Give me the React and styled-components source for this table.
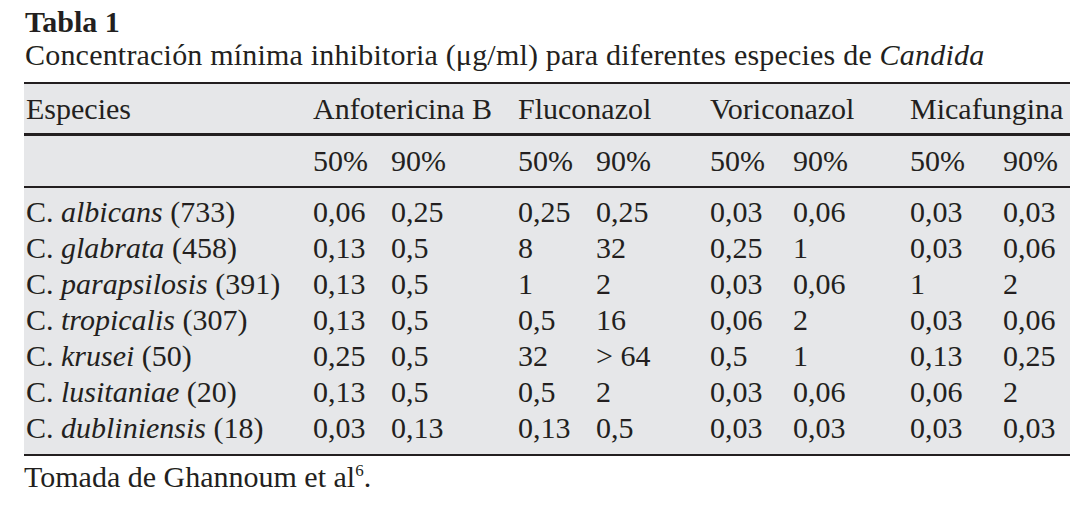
import styled, { createGlobalStyle } from "styled-components";

const GlobalStyle = createGlobalStyle`
  html, body {
    margin: 0;
    padding: 0;
    background: #ffffff;
  }
  body {
    font-family: "Liberation Serif", "Times New Roman", serif;
    color: #231f20;
  }
`;

const Page = styled.div`
  width: 1079px;
  height: 512px;
  padding: 5px 0 0 24px;
  box-sizing: border-box;
  overflow: hidden;
`;

const Title = styled.div`
  font-size: 30px;
  font-weight: 700;
  line-height: 33px;
  padding-left: 1px;
`;

const Caption = styled.div`
  font-size: 30px;
  line-height: 33px;
  letter-spacing: 0.2px;
  padding-left: 1px;
  margin-bottom: 11px;
`;

const Table = styled.table`
  width: 1046px;
  table-layout: fixed;
  border-collapse: separate;
  border-spacing: 0;
  background: #e6e7e9;
  border-top: 2px solid #231f20;
  border-bottom: 2px solid #231f20;
  font-size: 30px;
  line-height: 36px;

  tbody tr:first-child td {
    padding-top: 6px;
  }
  tbody tr:last-child td {
    padding-bottom: 8px;
  }
`;

const HeadCell = styled.th`
  padding: 7px 0 6px ${(p) => (p.$first ? "2px" : "0")};
  text-align: left;
  font-weight: 400;
  white-space: nowrap;
  border-bottom: 3px solid #231f20;
`;

const SubCell = styled.th`
  padding: 7px 0 7px 0;
  text-align: left;
  font-weight: 400;
  white-space: nowrap;
  border-bottom: 2px solid #231f20;
`;

const Cell = styled.td`
  padding: 0 0 0 ${(p) => (p.$first ? "2px" : "0")};
  white-space: nowrap;
  vertical-align: baseline;
`;

const Footer = styled.div`
  font-size: 30px;
  line-height: 36px;
  margin-top: 3px;

  sup {
    font-size: 17px;
    line-height: 0;
    vertical-align: 11px;
  }
`;

const widths = [289, 78, 127, 78, 114, 83, 117, 93, 67];

const drugs = ["Anfotericina B", "Fluconazol", "Voriconazol", "Micafungina"];

const rows = [
  ["albicans", "733", "0,06", "0,25", "0,25", "0,25", "0,03", "0,06", "0,03", "0,03"],
  ["glabrata", "458", "0,13", "0,5", "8", "32", "0,25", "1", "0,03", "0,06"],
  ["parapsilosis", "391", "0,13", "0,5", "1", "2", "0,03", "0,06", "1", "2"],
  ["tropicalis", "307", "0,13", "0,5", "0,5", "16", "0,06", "2", "0,03", "0,06"],
  ["krusei", "50", "0,25", "0,5", "32", "> 64", "0,5", "1", "0,13", "0,25"],
  ["lusitaniae", "20", "0,13", "0,5", "0,5", "2", "0,03", "0,06", "0,06", "2"],
  ["dubliniensis", "18", "0,03", "0,13", "0,13", "0,5", "0,03", "0,03", "0,03", "0,03"],
];

export default function App() {
  return (
    <>
      <GlobalStyle />
      <Page>
        <Title>Tabla 1</Title>
        <Caption>
          Concentración mínima inhibitoria (μg/ml) para diferentes especies de{" "}
          <i>Candida</i>
        </Caption>
        <Table>
          <colgroup>
            {widths.map((w, i) => (
              <col key={i} style={{ width: w }} />
            ))}
          </colgroup>
          <thead>
            <tr>
              <HeadCell $first>Especies</HeadCell>
              {drugs.map((d) => (
                <HeadCell key={d} colSpan={2}>
                  {d}
                </HeadCell>
              ))}
            </tr>
            <tr>
              <SubCell />
              {drugs.map((d) => [
                <SubCell key={d + "50"}>50%</SubCell>,
                <SubCell key={d + "90"}>90%</SubCell>,
              ])}
            </tr>
          </thead>
          <tbody>
            {rows.map(([name, n, ...vals]) => (
              <tr key={name}>
                <Cell $first>
                  C. <i>{name}</i> ({n})
                </Cell>
                {vals.map((v, i) => (
                  <Cell key={i}>{v}</Cell>
                ))}
              </tr>
            ))}
          </tbody>
        </Table>
        <Footer>
          Tomada de Ghannoum et al<sup>6</sup>.
        </Footer>
      </Page>
    </>
  );
}
